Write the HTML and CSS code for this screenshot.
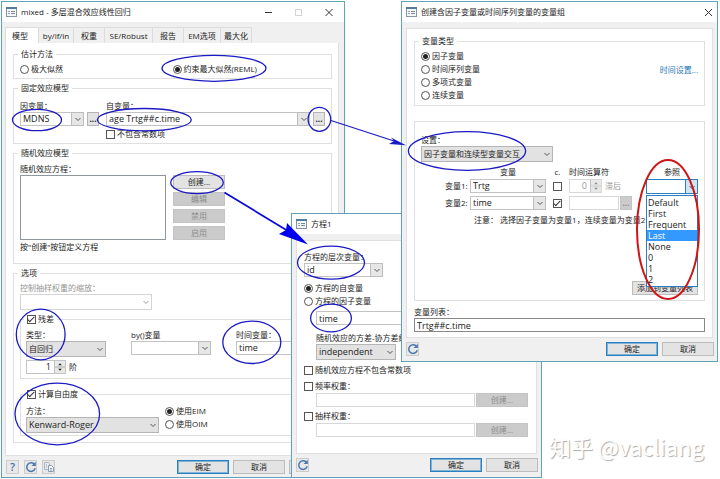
FILE: index.html
```html
<!DOCTYPE html>
<html lang="zh-CN">
<head>
<meta charset="utf-8">
<title>mixed - 多层混合效应线性回归</title>
<link rel="stylesheet" href="styles.css">
</head>
<body>
<svg class="defs" width="0" height="0" aria-hidden="true">
  <symbol id="app" viewBox="0 0 11 10"><rect x=".5" y=".5" width="10" height="9" fill="#f4f7fa" stroke="#8795a3"/><rect x="0" y="0" width="11" height="2" fill="#527c9f"/><path d="M2 4.5h2M2 6.5h2" stroke="#9aa5ae"/><path d="M5 4.5h4M5 6.5h4" stroke="#7d8a96"/></symbol>
  <symbol id="chev" viewBox="0 0 10 10"><path d="M2.5 4 5 6.5 7.5 4" fill="none" stroke="currentColor"/></symbol>
  <symbol id="reload" viewBox="0 0 12 12"><path d="M9.6 3.6A4.3 4.3 0 1 0 10.2 7.3" fill="none" stroke="#4a78b0" stroke-width="1.5"/><path d="M10.8 .8v4.2H6.6z" fill="#4a78b0"/></symbol>
  <symbol id="copy" viewBox="0 0 12 12"><path d="M1.5 1.5h4l1 1v6h-5z" fill="#e8edf3" stroke="#aab5c1"/><path d="M5.5 4.5h3l2 2v4h-5z" fill="#f2f5f8" stroke="#8d9bab"/><path d="M7 7.5h2M7 9h2M3 4h1M3 6h1" stroke="#8aa0ba"/></symbol>
</svg>

<main class="desktop">
<section class="window window-mixed">
  <header class="titlebar">
    <svg class="app-icon"><use href="#app"/></svg><h1>mixed - 多层混合效应线性回归</h1>
    <svg class="controls" viewBox="0 0 68 9"><path d="M0 4.5h7" stroke="#333"/><rect x="30.5" y="1.5" width="6" height="6" fill="none" stroke="#d4d4d4"/><path d="M60.500 1l7 7m0-7l-7 7" stroke="#333" fill="none"/></svg>
  </header>
  <nav class="tabs">
    <button class="active">模型</button><button>by/if/in</button><button>权重</button><button>SE/Robust</button><button>报告</button><button>EM选项</button><button>最大化</button>
  </nav>
  <div class="panel">
    <fieldset class="method">
      <legend>估计方法</legend>
      <label class="check"><input type="radio" name="est">极大似然</label>
      <label class="check"><input type="radio" name="est" checked>约束最大似然(REML)</label>
    </fieldset>
    <fieldset class="fixed">
      <legend>固定效应模型</legend>
      <div class="dep">
        <label for="dep">因变量：</label>
        <div class="line"><span class="combo"><select id="dep"><option>MDNS</option></select><i><svg><use href="#chev"/></svg></i></span><button class="dots">...</button></div>
      </div>
      <div class="indep">
        <label for="indep">自变量：</label>
        <div class="line"><span class="combo"><select id="indep"><option>age Trtg##c.time</option></select><i><svg><use href="#chev"/></svg></i></span><button class="dots">...</button></div>
        <label class="check"><input type="checkbox">不包含常数项</label>
      </div>
    </fieldset>
    <fieldset class="random">
      <legend>随机效应模型</legend>
      <label for="eqs">随机效应方程：</label>
      <div class="equations">
        <select id="eqs" class="listbox" size="4"></select>
        <div class="stack"><button class="btn">创建...</button><button class="btn" disabled>编辑</button><button class="btn" disabled>禁用</button><button class="btn" disabled>启用</button></div>
      </div>
      <p>按"创建"按钮定义方程</p>
    </fieldset>
    <fieldset class="options">
      <legend>选项</legend>
      <label class="muted" for="scale">控制抽样权重的缩放：</label>
      <span class="combo flat off wide"><select id="scale" disabled><option></option></select><i><svg><use href="#chev"/></svg></i></span>
      <fieldset class="residual">
        <legend><label class="check"><input type="checkbox" checked>残差</label></legend>
        <div class="columns">
          <div><label for="type">类型：</label><span class="combo flat"><select id="type"><option>自回归</option></select><i><svg><use href="#chev"/></svg></i></span></div>
          <div><label for="by">by()变量</label><span class="combo"><select id="by"><option></option></select><i><svg><use href="#chev"/></svg></i></span></div>
          <div><label for="tvar">时间变量：</label><span class="combo"><select id="tvar"><option>time</option></select><i><svg><use href="#chev"/></svg></i></span></div>
        </div>
        <div class="line order"><span class="spin"><input id="order" value="1"><svg viewBox="0 0 11 12"><path d="M0 6h11" stroke="#aaa"/><path d="M3.5 4 5.5 2l2 2zM3.5 8l2 2 2-2z" fill="#222"/></svg></span><label for="order">阶</label></div>
      </fieldset>
      <fieldset class="degrees">
        <legend><label class="check"><input type="checkbox" checked>计算自由度</label></legend>
        <div class="kr"><label for="kr">方法：</label><span class="combo flat"><select id="kr"><option>Kenward-Roger</option></select><i><svg><use href="#chev"/></svg></i></span></div>
        <div class="info"><label class="check"><input type="radio" name="im" checked>使用EIM</label><label class="check"><input type="radio" name="im">使用OIM</label></div>
      </fieldset>
    </fieldset>
  </div>
  <footer><button class="tool help">?</button><button class="tool" aria-label="重置"><svg><use href="#reload"/></svg></button><button class="tool" aria-label="复制"><svg><use href="#copy"/></svg></button><span class="grow"></span><button class="btn primary">确定</button><button class="btn">取消</button><button class="btn">提交</button></footer>
</section>

<section class="window window-equation">
  <header class="titlebar"><svg class="app-icon"><use href="#app"/></svg><h1>方程1</h1></header>
  <div class="panel">
    <label for="level">方程的层次变量：</label>
    <span class="combo level"><select id="level"><option>id</option></select><i><svg><use href="#chev"/></svg></i></span>
    <div class="kinds"><label class="check"><input type="radio" name="kind" checked>方程的自变量</label><label class="check"><input type="radio" name="kind">方程的因子变量</label></div>
    <div class="indent">
      <input class="field" aria-label="自变量" value="time">
      <label class="cov" for="cov">随机效应的方差-协方差结构：</label>
      <span class="combo flat"><select id="cov"><option>independent</option></select><i><svg><use href="#chev"/></svg></i></span>
    </div>
    <label class="check nocons"><input type="checkbox">随机效应方程不包含常数项</label>
    <label class="check weight"><input type="checkbox">频率权重：</label>
    <div class="line indent"><input class="field off" aria-label="频率权重" disabled><button class="btn" disabled>创建...</button></div>
    <label class="check weight"><input type="checkbox">抽样权重：</label>
    <div class="line indent"><input class="field off" aria-label="抽样权重" disabled><button class="btn" disabled>创建...</button></div>
  </div>
  <footer><button class="tool" aria-label="重置"><svg><use href="#reload"/></svg></button><span class="grow"></span><button class="btn primary">确定</button><button class="btn">取消</button></footer>
</section>

<section class="window window-varlist">
  <header class="titlebar"><svg class="app-icon"><use href="#app"/></svg><h1>创建含因子变量或时间序列变量的变量组</h1><svg class="close" viewBox="0 0 9 9"><path d="M1 1l7 7m0-7l-7 7" stroke="#333" fill="none"/></svg></header>
  <div class="panel">
    <fieldset class="types">
      <legend>变量类型</legend>
      <div class="type-row">
        <div class="type-list"><label class="check"><input type="radio" name="vt" checked>因子变量</label><label class="check"><input type="radio" name="vt">时间序列变量</label><label class="check"><input type="radio" name="vt">多项式变量</label><label class="check"><input type="radio" name="vt">连续变量</label></div>
        <a href="#time">时间设置...</a>
      </div>
    </fieldset>
    <div class="setup">
      <label for="setup">设置：</label>
      <span class="combo flat wide"><select id="setup"><option>因子变量和连续型变量交互</option></select><i><svg><use href="#chev"/></svg></i></span>
      <div class="vars">
        <span></span><b>变量</b><b>c.</b><b class="left">时间运算符</b><b>参照</b>
        <label for="v1">变量1:</label>
        <span class="combo"><select id="v1"><option>Trtg</option></select><i><svg><use href="#chev"/></svg></i></span>
        <input type="checkbox" aria-label="c. 变量1">
        <div class="line lag"><span class="spin off"><input id="lag" value="0" disabled><svg viewBox="0 0 11 12"><path d="M0 6h11" stroke="#ccc"/><path d="M3.5 4 5.5 2l2 2zM3.5 8l2 2 2-2z" fill="#888"/></svg></span><label class="muted" for="lag">滞后</label></div>
        <div class="ref"><span class="combo open"><input aria-label="参照" autofocus><i><svg><use href="#chev"/></svg></i></span>
          <ul class="menu"><li>Default</li><li>First</li><li>Frequent</li><li class="selected">Last</li><li>None</li><li>0</li><li>1</li><li>2</li></ul>
        </div>
        <label for="v2">变量2:</label>
        <span class="combo"><select id="v2"><option>time</option></select><i><svg><use href="#chev"/></svg></i></span>
        <input type="checkbox" checked aria-label="c. 变量2">
        <div class="line operator"><input class="field off" aria-label="时间运算符" disabled><button class="dots" disabled>...</button></div>
      </div>
      <p>注意： 选择因子变量为变量1，连续变量为变量2</p>
      <button class="btn add">添加到变量列表</button>
    </div>
    <label for="list">变量列表：</label>
    <input class="field result" id="list" value="Trtg##c.time">
  </div>
  <footer><button class="tool" aria-label="重置"><svg><use href="#reload"/></svg></button><span class="grow"></span><button class="btn primary">确定</button><button class="btn">取消</button></footer>
</section>

<svg class="marks" width="720" height="479" viewBox="0 0 720 479" aria-hidden="true">
  <g fill="none" stroke="#1b1bc4" stroke-width="1.3">
    <ellipse cx="214" cy="68.3" rx="52" ry="13"/><ellipse cx="37" cy="120" rx="24.5" ry="10.7"/><ellipse cx="144.3" cy="119.7" rx="47" ry="11.2"/><ellipse cx="319.4" cy="119.3" rx="11.3" ry="12"/>
    <ellipse cx="197" cy="182.6" rx="26.3" ry="11"/><ellipse cx="331" cy="262.7" rx="33.5" ry="16.5"/><ellipse cx="331" cy="318" rx="20.4" ry="13.8"/><ellipse cx="40.7" cy="334.5" rx="24.4" ry="25.3"/>
    <ellipse cx="251.8" cy="342.3" rx="29" ry="21.2"/><ellipse cx="57.3" cy="414" rx="42.3" ry="30.8"/><ellipse cx="467" cy="151" rx="58.6" ry="19.3"/>
    <path d="M331 120.5 394 141"/>
  </g>
  <path d="M391 137.5 406 145.3 389 144 394 141z" fill="#1b1bc4"/>
  <path d="M224.5 192.5 288 231" stroke="#0808d8" stroke-width="1.7"/>
  <path d="M287 223 308 244.5 279 234 286 230z" fill="#0000f0"/>
  <ellipse cx="668" cy="229.5" rx="31" ry="69.5" fill="none" stroke="#cf1414" stroke-width="2"/>
</svg>
<p class="watermark">知乎 @vacliang</p>
</main>
</body>
</html>
```
FILE: styles.css
```css
* { box-sizing: border-box; }
body { margin: 0; background: #fff; color: #222; font: 8px/12px "Open Sans", "Noto Sans CJK SC", sans-serif; }
button, input, select { font: inherit; color: inherit; margin: 0; padding: 0; border-radius: 0; }
p, h1, ul { margin: 0; padding: 0; }
label { display: block; }
.defs { position: absolute; }
.desktop { position: relative; min-height: 479px; overflow: hidden; }

.window { position: absolute; display: flex; flex-direction: column; background: #f0f0f0; border: 1px solid #5fa3b8; }
.window-mixed { left: 1px; top: 1px; width: 344px; }
.window-equation { left: 291px; top: 213px; width: 251px; }
.window-varlist { left: 401px; top: 1px; width: 317px; }
.titlebar { display: flex; align-items: center; height: 20px; padding: 0 4px; background: #fff; }
.titlebar h1 { flex: 1; padding-left: 4px; font-size: 8px; font-weight: 400; }
.app-icon { width: 11px; height: 10px; }
.controls { width: 68px; height: 9px; margin-right: 7px; }
.close { width: 9px; height: 9px; }

.tabs { display: grid; grid-template-columns: 34px 35px 31px 48px 31px 37px 31px; margin: 5px 3px 0; }
.tabs button { height: 16px; border: 1px solid #dcdcdc; border-width: 1px 1px 0 0; background: #f0f0f0; }
.tabs .active { background: #fff; padding-right: 4px; border-left-width: 1px; }

.panel { display: flex; flex-direction: column; margin: 6px 4px 0; padding: 6px 7px 5px; background: #fff; border: 1px solid #e0e0e0; }
.window-mixed .panel { gap: 3px; margin: 0 5px 0 3px; padding: 5px 6px 12px 7px; border-top: 0; }
footer { display: flex; gap: 4px; padding: 4px 3px 5px 4px; }
.window-mixed footer { padding-bottom: 3px; }
.grow { flex: 1; }

fieldset { min-width: 0; margin: 0; padding: 0 6px; border: 1px solid #dfdfdf; }
legend { padding: 0 3px; margin-left: -2px; line-height: 12px; }
.check { display: flex; align-items: center; gap: 2px; }
input[type="radio"], input[type="checkbox"] { appearance: none; flex: none; width: 9px; height: 9px; border: 1px solid #555; background: #fff; display: grid; place-items: center; }
input[type="radio"] { border-radius: 50%; }
input[type="radio"]:checked::after { content: ""; width: 5px; height: 5px; border-radius: 50%; background: #222; }
input[type="checkbox"]:checked::after { content: ""; width: 6px; height: 3px; border: 1px solid #333; border-width: 0 0 1px 1px; transform: rotate(-45deg) translate(0, -1px); }

.combo { display: grid; height: 14px; color: #222; }
.combo select, .combo input { grid-area: 1 / 1; appearance: none; width: 100%; height: 100%; min-width: 0; padding: 0 2px; border: 1px solid #c3c3c3; background: #fff; font-size: 9px; line-height: 12px; outline: 0; }
.combo i { grid-area: 1 / 1; justify-self: end; display: grid; place-items: center; width: 13px; height: 100%; border: 1px solid #bdbdbd; background: #e6e6e6; pointer-events: none; color: #555; }
.combo svg { width: 10px; height: 10px; }
.combo.flat { height: 16px; }
.combo.flat select { background: #e2e2e2; border-color: #b5b5b5; }
.combo.flat i { border-color: transparent; background: none; }
.combo.flat.off select { background: #fff; border-color: #d4d4d4; opacity: 1; }
.combo.off i { color: #999; }
.combo.wide { width: 132px; }
#type, #setup { font-size: 8px; }
.field { flex: 1; min-width: 0; width: 100%; height: 14px; padding: 0 2px; border: 1px solid #c3c3c3; background: #fff; font-size: 9px; }
.field.off { border-color: #d8d8d8; }
.line { display: flex; gap: 3px; align-items: center; }
.line .combo { flex: 1; }
.btn { width: 52px; height: 14px; border: 1px solid #bcbcbc; background: #e3e3e3; line-height: 10px; text-align: center; flex: none; }
.btn:disabled, .dots:disabled { background: #cbcbcb; border-color: #c4c4c4; color: #8b8b8b; }
.btn.primary { border: 1px solid #2a7fc0; outline: 1px solid #7db2d9; outline-offset: -2px; }
.dots { width: 12px; height: 14px; border: 1px solid #b5b5b5; background: #e3e3e3; line-height: 10px; font-weight: 700; }
.tool { display: grid; place-items: center; width: 13px; height: 14px; margin-right: 1px; border: 1px solid #ccc; background: #e8e8e8; }
.tool svg { width: 12px; height: 12px; }
.help { color: #3f6fa8; font-size: 11px; font-weight: 600; }
.muted { color: #969696; }

.method { display: grid; grid-template-columns: 1fr 1fr; padding: 3px 6px; }
.fixed { display: flex; gap: 7px; padding: 6px 6px 3px; }
.dep { width: 79px; }
.indep { flex: 1; }
.indep .check { margin-top: 2px; }
.random { padding: 4px 6px 10px; }
.equations { display: flex; gap: 7px; margin-bottom: 1px; }
.listbox { width: 146px; border: 1px solid #8f979d; background: #fff; }
.stack { display: grid; gap: 3px; }
.options { padding: 3px 6px 6px; }
.residual { margin-top: 3px; padding: 4px 8px 4px 5px; }
.columns { display: grid; grid-template-columns: 80px 80px 80px; justify-content: space-between; }
.order { margin-top: 3px; }
.spin { display: flex; width: 40px; height: 14px; border: 1px solid #c3c3c3; background: #fff; }
.spin input { flex: 1; min-width: 0; border: 0; background: none; text-align: right; padding-right: 3px; font-size: 9px; }
.spin svg { width: 11px; height: 12px; background: #e8e8e8; border-left: 1px solid #c3c3c3; }
.spin.off { border-color: #d8d8d8; color: #999; }
.degrees { display: flex; gap: 6px; margin-top: 9px; padding: 5px 5px 2px; }
.kr { width: 133px; }
.info { display: grid; align-content: start; gap: 1px; }

.window-equation .panel { padding: 10px 8px 13px 7px; }
.level { width: 79px; }
.kinds { display: grid; gap: 1px; margin: 5px 0 4px; }
.indent { margin-left: 12px; }
.indent > .combo { width: 80px; }
.cov { margin-top: 7px; white-space: nowrap; }
.nocons { margin: 4px 0; }
.line.indent { gap: 1px; margin-top: 1px; margin-bottom: 3px; }

.types { padding: 3px 6px 4px; }
.type-row { display: flex; justify-content: space-between; }
.type-list { display: grid; gap: 1px; }
a { color: #1f78b8; text-decoration: none; margin-top: 14px; }
.setup { display: flex; flex-direction: column; margin: 15px 0 5px; padding: 12px 6px 5px; border: 1px solid #dfdfdf; }
.vars { display: grid; grid-template-columns: 18px 76px 9px 1fr 52px; column-gap: 7px; row-gap: 3px; align-items: center; margin: 6px 0 4px 24px; }
.vars b { font-weight: 400; text-align: center; line-height: 8px; }
.vars .left { text-align: left; }
.vars label { white-space: nowrap; }
.lag .spin { width: 33px; }
.operator { gap: 1px; width: 63px; }
.ref { position: relative; }
.combo.open input { border-color: #2a7fc0; }
.combo.open i { border-color: #2a7fc0; background: #cfe4f5; }
.menu { position: absolute; z-index: 1; left: 0; right: 0; top: 16px; height: 92px; overflow: hidden; padding-top: 1px; border: 1px solid #2a7fc0; background: #fff; list-style: none; font-size: 9px; line-height: 11px; }
.menu li { padding-left: 1px; }
.menu .selected { background: #3399ff; color: #fff; }
.setup p { padding-left: 53px; }
.add { width: 66px; align-self: end; margin-top: 55px; }
.result { flex: none; border-color: #888; }

.marks { position: absolute; left: 0; top: 0; z-index: 2; pointer-events: none; }
.watermark { position: absolute; left: 549px; top: 432px; font-size: 22px; line-height: 28px; color: #fff; text-shadow: 1px 1px 1px #aaa; white-space: nowrap; font-family: "Noto Sans CJK SC", sans-serif; }
```
